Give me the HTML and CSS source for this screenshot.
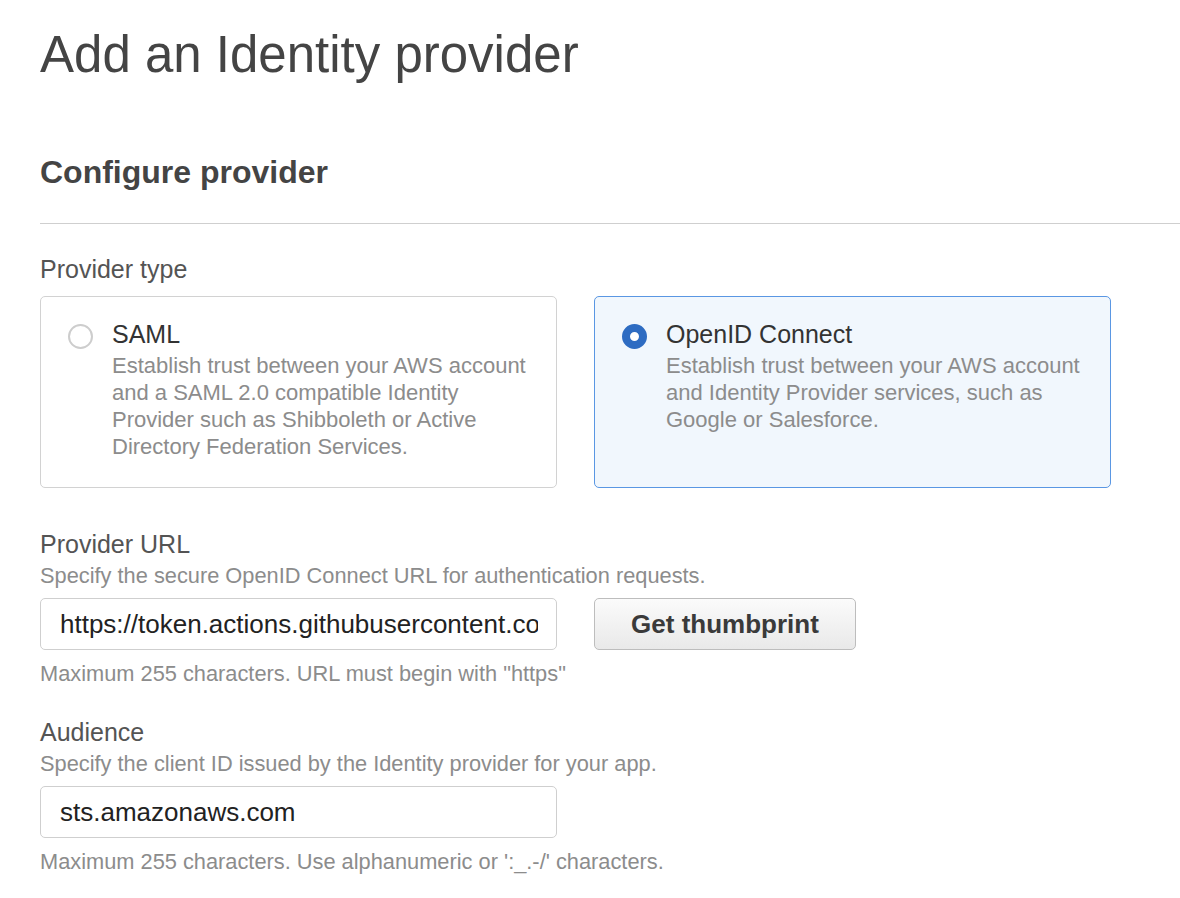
FILE: index.html
```html
<!DOCTYPE html>
<html lang="en">
<head>
<meta charset="utf-8">
<title>Add an Identity provider</title>
<link rel="stylesheet" href="styles.css">
</head>
<body>
<main class="page">
  <h1 class="page-title">Add an Identity provider</h1>
  <h2 class="section-title">Configure provider</h2>
  <hr class="divider">

  <div class="field-label">Provider type</div>
  <div class="tiles">
    <label class="tile">
      <span class="radio"></span>
      <span class="tile-body">
        <span class="tile-title">SAML</span>
        <span class="tile-desc">Establish trust between your AWS account and a SAML 2.0 compatible Identity Provider such as Shibboleth or Active Directory Federation Services.</span>
      </span>
    </label>
    <label class="tile tile-selected">
      <span class="radio radio-checked"></span>
      <span class="tile-body">
        <span class="tile-title">OpenID Connect</span>
        <span class="tile-desc">Establish trust between your AWS account and Identity Provider services, such as Google or Salesforce.</span>
      </span>
    </label>
  </div>

  <div class="field field-first">
    <div class="field-label">Provider URL</div>
    <div class="field-desc">Specify the secure OpenID Connect URL for authentication requests.</div>
    <div class="field-row">
      <input class="text-input" type="text" value="https://token.actions.githubusercontent.com">
      <button class="btn" type="button">Get thumbprint</button>
    </div>
    <div class="field-help">Maximum 255 characters. URL must begin with "https"</div>
  </div>

  <div class="field">
    <div class="field-label">Audience</div>
    <div class="field-desc">Specify the client ID issued by the Identity provider for your app.</div>
    <div class="field-row">
      <input class="text-input" type="text" value="sts.amazonaws.com">
    </div>
    <div class="field-help">Maximum 255 characters. Use alphanumeric or ':_.-/' characters.</div>
  </div>
</main>
</body>
</html>
```

FILE: styles.css
```css
* { box-sizing: border-box; }

html, body {
  margin: 0;
  padding: 0;
  background: #ffffff;
}

body {
  font-family: "Liberation Sans", Arial, Helvetica, sans-serif;
  color: #444;
}

.page {
  padding: 25px 0 0 40px;
}

.page-title {
  margin: 0;
  font-size: 51px;
  line-height: 60px;
  font-weight: 400;
  color: #444;
}

.section-title {
  margin: 67px 0 0 0;
  font-size: 32px;
  line-height: 40px;
  font-weight: 700;
  color: #444;
}

.divider {
  margin: 31px 0 0 0;
  border: 0;
  height: 1px;
  background: #cfcfcf;
}

.field-label {
  margin-top: 30px;
  font-size: 25px;
  line-height: 30px;
  color: #545454;
}

.tiles {
  display: grid;
  grid-template-columns: 517px 517px;
  column-gap: 37px;
  margin-top: 12px;
}

.tile {
  display: flex;
  align-items: flex-start;
  gap: 19px;
  padding: 22px 20px 27px 27px;
  border: 1px solid #d2d2d2;
  border-radius: 5px;
  background: #fff;
}

.tile-selected {
  border-color: #5a97e3;
  background: #f1f7fd;
}

.radio {
  flex: none;
  width: 25px;
  height: 25px;
  margin-top: 5px;
  border-radius: 50%;
  border: 2px solid #cdcdcd;
  background: #fff;
}

.radio-checked {
  border: 8px solid #2e6cc2;
  background: #fff;
}

.tile-body {
  display: flex;
  flex-direction: column;
}

.tile-title {
  font-size: 25px;
  line-height: 30px;
  color: #333;
  margin-bottom: 3px;
}

.tile-desc {
  font-size: 22px;
  line-height: 27px;
  color: #8c8c8c;
}

.field .field-label {
  margin-top: 30px;
  margin-bottom: 3px;
}

.field-first .field-label {
  margin-top: 41px;
}

.field-desc,
.field-help {
  font-size: 21.8px;
  line-height: 27px;
  color: #8c8c8c;
}

.field-row {
  display: flex;
  gap: 37px;
  margin-top: 9px;
}

.field-help {
  margin-top: 10px;
}

.text-input {
  width: 517px;
  height: 52px;
  padding: 0 18px 0 19px;
  border: 1px solid #cfcfcf;
  border-radius: 5px;
  background: #fff;
  font-family: "Liberation Sans", Arial, Helvetica, sans-serif;
  font-size: 26px;
  color: #222;
  outline: none;
}

.btn {
  width: 262px;
  height: 52px;
  padding: 0;
  border: 1px solid #bdbdbd;
  border-radius: 5px;
  background: linear-gradient(#fbfbfb, #e9e9e9);
  font-family: "Liberation Sans", Arial, Helvetica, sans-serif;
  font-size: 26px;
  font-weight: 700;
  color: #3a3a3a;
}
```
